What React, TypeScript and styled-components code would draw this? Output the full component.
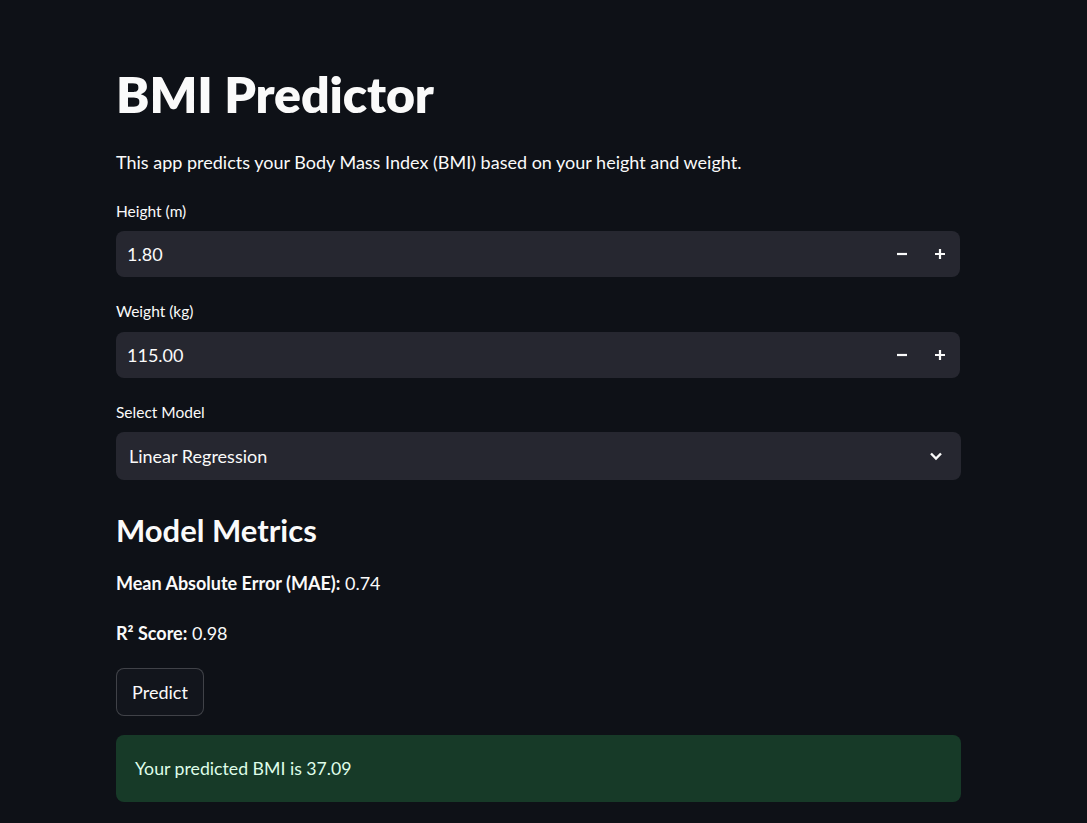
import React from "react";
import styled, { createGlobalStyle } from "styled-components";

const Global = createGlobalStyle`
  html, body { margin: 0; padding: 0; background: #0e1117; }
  body { font-family: Lato, "Noto Sans", sans-serif; color: #fafafa; }
  * { box-sizing: border-box; }
`;

const Page = styled.div`
  min-height: 823px;
  background: #0e1117;
  padding: 64px 0 40px 116px;
`;

const Main = styled.main`
  width: 844px;
  display: flex;
  flex-direction: column;
`;

const Title = styled.h1`
  margin: 0;
  font-size: 50px;
  line-height: 60px;
  font-weight: 800;
  letter-spacing: -0.1px;
`;

const Paragraph = styled.p`
  margin: 26px 0 0;
  font-size: 18px;
  line-height: 24px;
  font-weight: 400;
`;

const Label = styled.label<{ $top: number }>`
  display: block;
  margin-top: ${(p) => p.$top}px;
  font-size: 15.5px;
  line-height: 20px;
`;

const Field = styled.div<{ $height: number; $top: number; $wide?: boolean }>`
  margin-top: ${(p) => p.$top}px;
  height: ${(p) => p.$height}px;
  width: ${(p) => (p.$wide ? 845 : 844)}px;
  background: #262730;
  border-radius: 8px;
  display: flex;
  align-items: center;
`;

const Value = styled.span<{ $pad: number }>`
  flex: 1;
  padding-left: ${(p) => p.$pad}px;
  font-size: 18px;
  color: #fafafa;
`;

const StepButton = styled.span`
  width: 38px;
  height: 100%;
  display: flex;
  align-items: center;
  justify-content: center;
`;

const Steps = styled.div`
  display: flex;
  height: 100%;
  padding-right: 1px;
`;

const Chevron = styled.span`
  width: 24px;
  margin-right: 13px;
  display: flex;
  align-items: center;
  justify-content: center;
`;

const Heading = styled.h2`
  margin: 30px 0 0;
  font-size: 31px;
  line-height: 40px;
  font-weight: 700;
`;

const Metric = styled.p<{ $top: number }>`
  margin: ${(p) => p.$top}px 0 0;
  font-size: 18px;
  line-height: 24px;
  b { font-weight: 700; }
`;

const Button = styled.button`
  margin-top: 23px;
  align-self: flex-start;
  width: 88px;
  height: 48px;
  background: #12151c;
  border: 1px solid rgba(250, 250, 250, 0.2);
  border-radius: 8px;
  color: #fafafa;
  font-family: Lato, "Noto Sans", sans-serif;
  font-size: 18px;
  padding: 0;
`;

const Success = styled.div`
  margin-top: 19px;
  width: 845px;
  height: 67px;
  background: #173a28;
  border-radius: 8px;
  display: flex;
  align-items: center;
  padding-left: 19px;
  font-size: 17.7px;
  color: #dffde9;
`;

const MinusIcon = () => (
  <svg width="12" height="12" viewBox="0 0 12 12">
    <path d="M1 6h10" stroke="#fafafa" strokeWidth="2.2" />
  </svg>
);

const PlusIcon = () => (
  <svg width="12" height="12" viewBox="0 0 12 12">
    <path d="M1 6h10M6 1v10" stroke="#fafafa" strokeWidth="2.2" />
  </svg>
);

const ChevronIcon = () => (
  <svg width="14" height="10" viewBox="0 0 14 10">
    <path d="M2 2.5l5 5 5-5" stroke="#fafafa" strokeWidth="2.4" fill="none" />
  </svg>
);

const NumberInput = ({ top, value }: { top: number; value: string }) => (
  <Field $height={46} $top={top}>
    <Value $pad={11}>{value}</Value>
    <Steps>
      <StepButton>
        <MinusIcon />
      </StepButton>
      <StepButton>
        <PlusIcon />
      </StepButton>
    </Steps>
  </Field>
);

export default function App() {
  return (
    <Page>
      <Global />
      <Main>
        <Title>BMI Predictor</Title>
        <Paragraph>
          This app predicts your Body Mass Index (BMI) based on your height and weight.
        </Paragraph>
        <Label $top={27}>Height (m)</Label>
        <NumberInput top={10} value="1.80" />
        <Label $top={24}>Weight (kg)</Label>
        <NumberInput top={11} value="115.00" />
        <Label $top={24}>Select Model</Label>
        <Field $height={48} $top={10} $wide>
          <Value $pad={13}>Linear Regression</Value>
          <Chevron>
            <ChevronIcon />
          </Chevron>
        </Field>
        <Heading>Model Metrics</Heading>
        <Metric $top={21}>
          <b>Mean Absolute Error (MAE):</b> 0.74
        </Metric>
        <Metric $top={26}>
          <b>R² Score:</b> 0.98
        </Metric>
        <Button>Predict</Button>
        <Success>Your predicted BMI is 37.09</Success>
      </Main>
    </Page>
  );
}
